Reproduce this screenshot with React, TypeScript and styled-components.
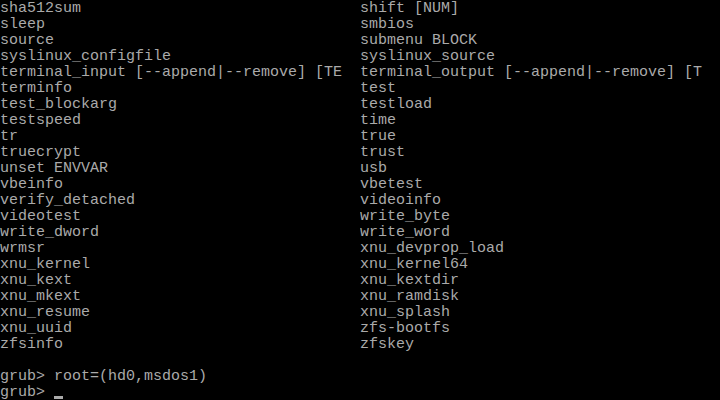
import React from "react";
import styled, { createGlobalStyle } from "styled-components";

const Global = createGlobalStyle`
  html, body { margin: 0; padding: 0; background: #000; }
  body { width: 720px; height: 400px; overflow: hidden; }
`;

const Screen = styled.div`
  width: 720px;
  height: 400px;
  background: #000;
  color: #aaaaaa;
  font-family: "Liberation Mono", "DejaVu Sans Mono", monospace;
  font-size: 15px;
  line-height: 16px;
  overflow: hidden;
  padding-top: 1px;
  box-sizing: border-box;
`;

const Grid = styled.div`
  display: grid;
  grid-template-columns: 360px 360px;
  grid-auto-rows: 16px;
`;

const Cell = styled.div`
  white-space: pre;
  overflow: hidden;
  height: 16px;
`;

const Line = styled.div`
  white-space: pre;
  height: 16px;
`;

const Cursor = styled.span`
  display: inline-block;
  width: 9px;
  height: 3px;
  background: #aaaaaa;
  vertical-align: -3px;
`;

const rows: [string, string][] = [
  ["sha512sum", "shift [NUM]"],
  ["sleep", "smbios"],
  ["source", "submenu BLOCK"],
  ["syslinux_configfile", "syslinux_source"],
  ["terminal_input [--append|--remove] [TE", "terminal_output [--append|--remove] [T"],
  ["terminfo", "test"],
  ["test_blockarg", "testload"],
  ["testspeed", "time"],
  ["tr", "true"],
  ["truecrypt", "trust"],
  ["unset ENVVAR", "usb"],
  ["vbeinfo", "vbetest"],
  ["verify_detached", "videoinfo"],
  ["videotest", "write_byte"],
  ["write_dword", "write_word"],
  ["wrmsr", "xnu_devprop_load"],
  ["xnu_kernel", "xnu_kernel64"],
  ["xnu_kext", "xnu_kextdir"],
  ["xnu_mkext", "xnu_ramdisk"],
  ["xnu_resume", "xnu_splash"],
  ["xnu_uuid", "zfs-bootfs"],
  ["zfsinfo", "zfskey"],
  ["", ""],
];

export default function App() {
  return (
    <>
      <Global />
      <Screen>
        <Grid>
          {rows.map(([a, b], i) => (
            <React.Fragment key={i}>
              <Cell>{a}</Cell>
              <Cell>{b}</Cell>
            </React.Fragment>
          ))}
        </Grid>
        <Line>grub&gt; root=(hd0,msdos1)</Line>
        <Line>
          grub&gt; <Cursor />
        </Line>
      </Screen>
    </>
  );
}
